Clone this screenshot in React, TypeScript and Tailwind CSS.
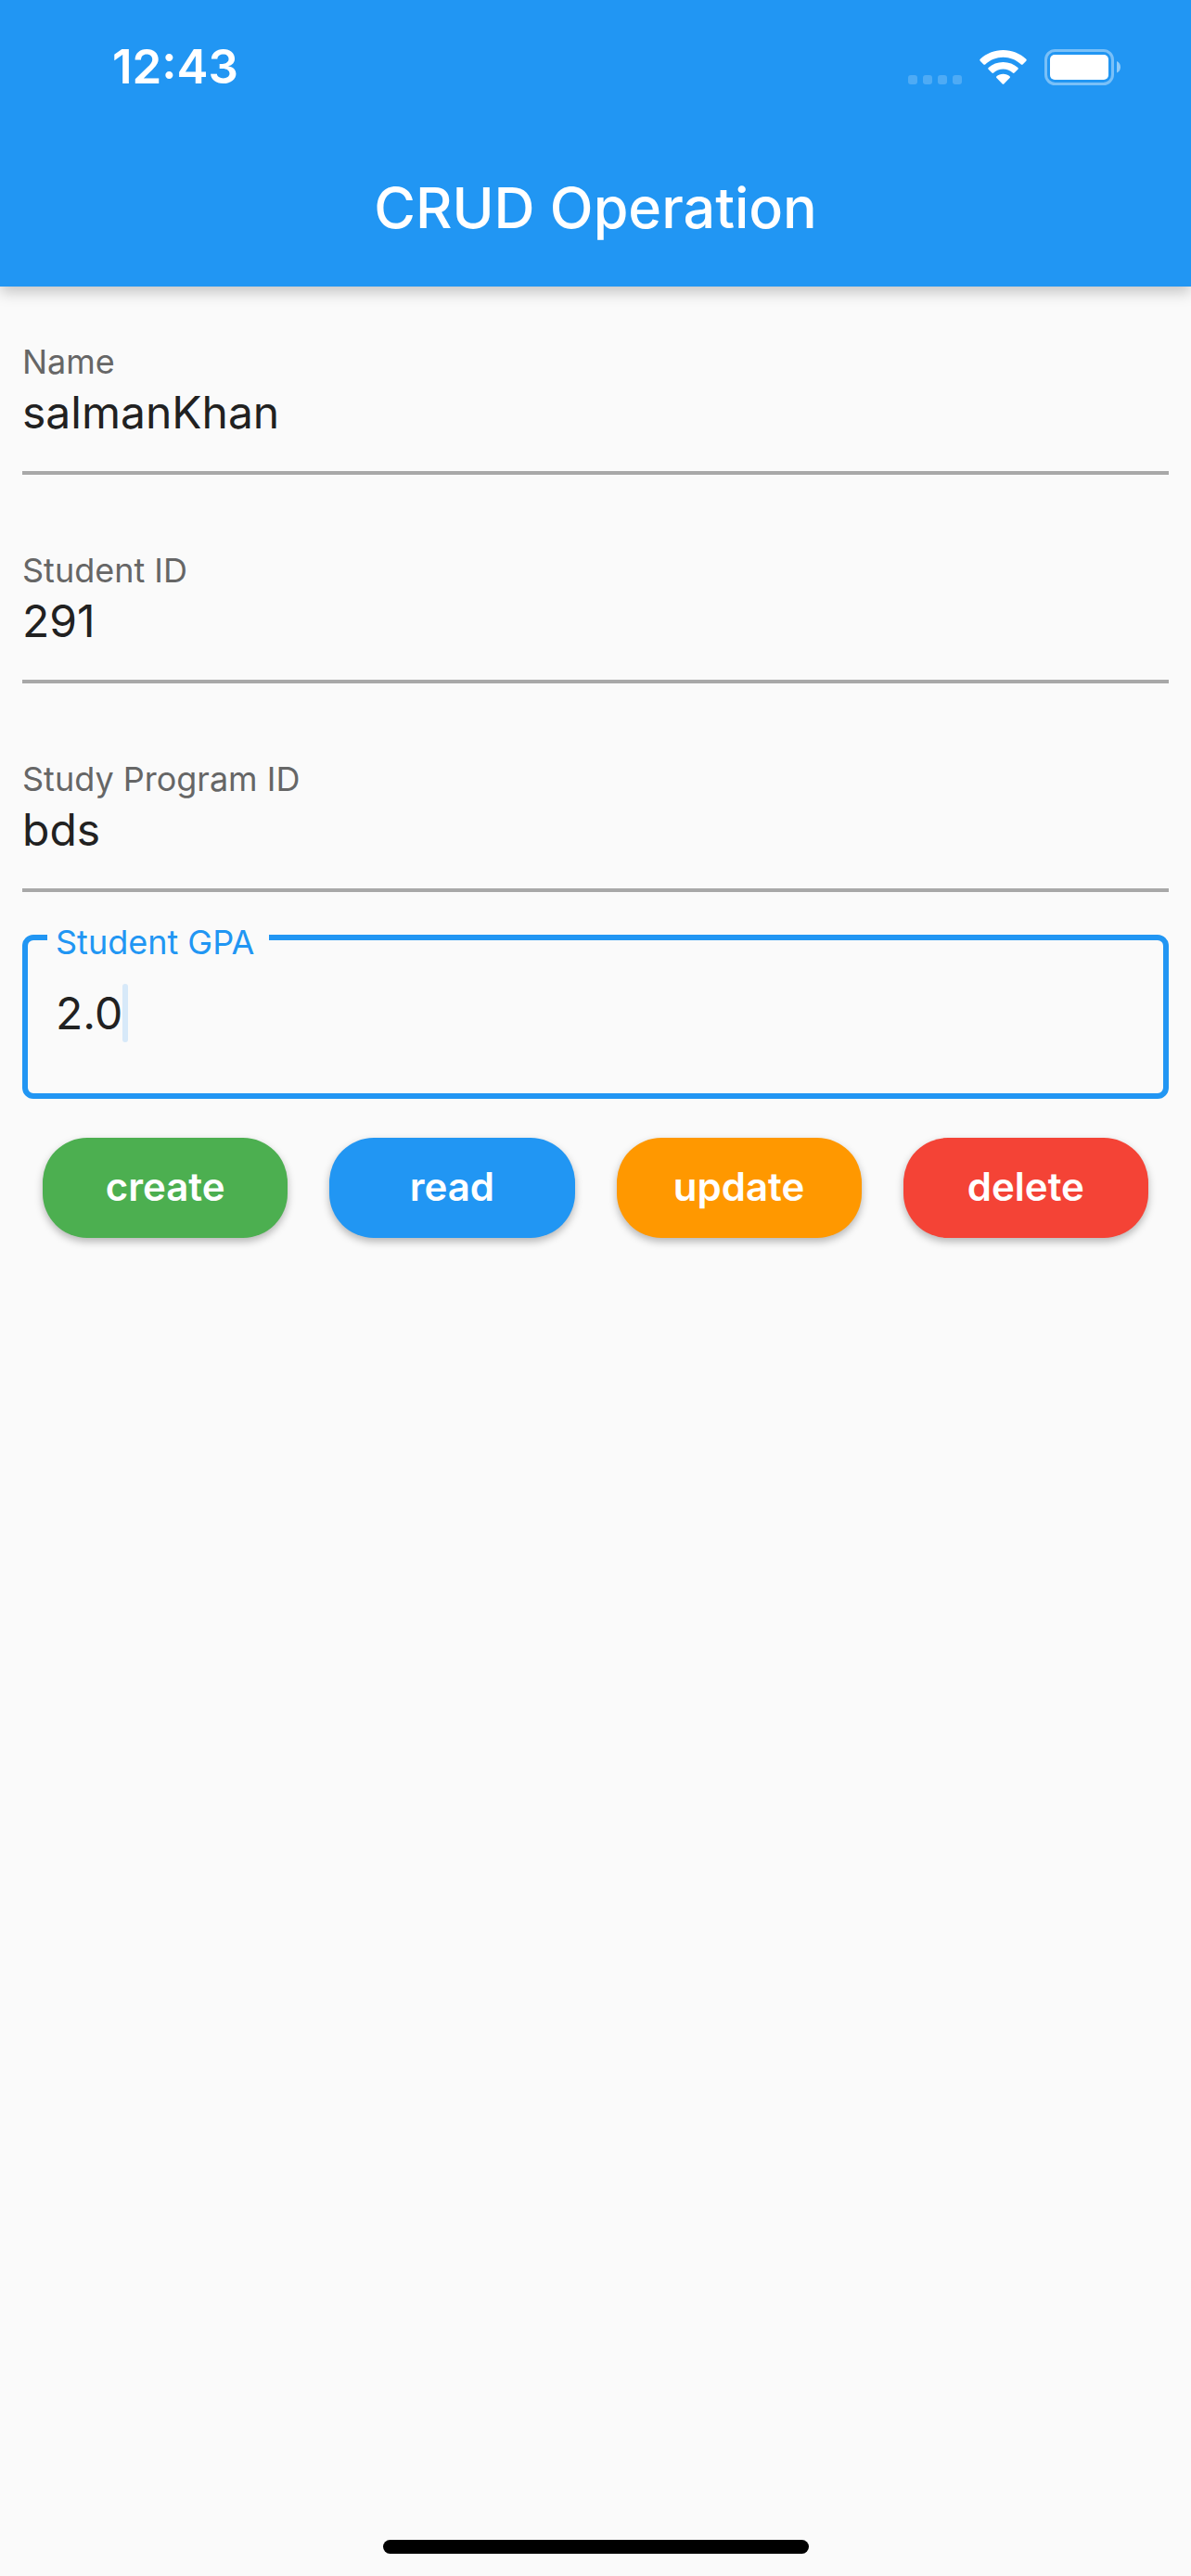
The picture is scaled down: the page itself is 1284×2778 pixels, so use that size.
import { useState } from "react";

const studentFields = [
  { id: "name", label: "Name", value: "salmanKhan" },
  { id: "student-id", label: "Student ID", value: "291" },
  { id: "program-id", label: "Study Program ID", value: "bds" },
];

const actions = [
  { label: "create", color: "bg-[#4caf50]" },
  { label: "read", color: "bg-[#2196f3]" },
  { label: "update", color: "bg-[#ff9800]" },
  { label: "delete", color: "bg-[#f44336]" },
];

function StatusIcons() {
  return (
    <svg className="h-[40px] w-[230px]" viewBox="979 52 230 40" fill="white" aria-hidden="true">
      <g opacity="0.2">
        <rect x="979" y="81" width="10" height="10" rx="3" />
        <rect x="995" y="81" width="10" height="10" rx="3" />
        <rect x="1011" y="81" width="10" height="10" rx="3" />
        <rect x="1027" y="81" width="10" height="10" rx="3" />
      </g>
      <path d="M1081.500 54 C1091 54 1099.500 57.500 1106.300 63.700 Q1107.300 64.700 1106.300 65.700 L1102.600 69.400 Q1101.700 70.200 1100.800 69.400 C1095.500 64.600 1088.700 61.800 1081.500 61.800 C1074.300 61.800 1067.500 64.600 1062.200 69.400 Q1061.300 70.200 1060.400 69.400 L1056.700 65.700 Q1055.700 64.700 1056.700 63.700 C1063.500 57.500 1072 54 1081.500 54 Z" />
      <path d="M1081.500 66.900 C1087.600 66.900 1093.100 69.100 1097.400 72.900 Q1098.300 73.800 1097.400 74.700 L1093.600 78.500 Q1092.700 79.300 1091.800 78.500 C1088.900 76 1085.300 74.600 1081.500 74.600 C1077.700 74.600 1074.100 76 1071.200 78.500 Q1070.300 79.300 1069.400 78.500 L1065.600 74.700 Q1064.700 73.800 1065.600 72.900 C1069.900 69.100 1075.400 66.900 1081.500 66.900 Z" />
      <path d="M1081.500 79.700 C1084.300 79.700 1086.900 80.600 1088.600 82.200 Q1089.500 83.100 1088.600 84 L1082.300 90.400 Q1081.500 91.200 1080.700 90.400 L1074.400 84 Q1073.500 83.100 1074.400 82.200 C1076.100 80.600 1078.700 79.700 1081.500 79.700 Z" />
      <rect x="1127.500" y="54.500" width="72" height="36" rx="10" fill="none" stroke="white" strokeWidth="3" opacity="0.4" />
      <rect x="1132" y="59" width="63" height="27" rx="5" />
      <path d="M1204 66 C1206.500 67 1208 69.300 1208 72.300 C1208 75.300 1206.500 77.600 1204 78.600 Z" opacity="0.5" />
    </svg>
  );
}

export default function App() {
  const [gpa, setGpa] = useState("2.0");

  return (
    <div className="flex min-h-screen flex-col bg-[#fafafa] font-['Inter',sans-serif] text-[#212121]">
      <header className="bg-[#2196f3] text-white shadow-[0_6px_15px_rgba(0,0,0,0.22)]">
        <div className="flex h-[141px] items-center justify-between pt-[3px] pr-[75px] pl-[121px]">
          <time className="text-[51px] leading-[60px] font-semibold">12:43</time>
          <StatusIcons />
        </div>
        <h1 className="flex h-[168px] items-center justify-center text-[61px] font-medium">
          CRUD Operation
        </h1>
      </header>

      <main className="flex-1">
        <form onSubmit={(event) => event.preventDefault()}>
          <div className="px-6">
            {studentFields.map((field) => (
              <div key={field.id} className="flex h-[225px] flex-col justify-end first:h-[203px]">
                <label htmlFor={field.id} className="text-[36px] leading-[44px] text-[#666666]">
                  {field.label}
                </label>
                <input
                  id={field.id}
                  type="text"
                  defaultValue={field.value}
                  className="h-[100px] border-b-4 border-[#a8a8a8] bg-transparent pb-[32px] text-[48px] outline-none"
                />
              </div>
            ))}

            <div className="relative mt-[46px] flex h-[177px] items-center rounded-xl border-6 border-[#2196f3] pb-2 pl-[30px]">
              <label
                htmlFor="gpa"
                className="absolute -top-5 left-[21px] bg-[#fafafa] pr-4 pl-[9px] text-[36px] leading-[44px] text-[#2196f3]"
              >
                Student GPA
              </label>
              <input
                id="gpa"
                type="text"
                value={gpa}
                onChange={(event) => setGpa(event.target.value)}
                className="field-sizing-content bg-transparent text-[48px] caret-transparent outline-none"
              />
              <span className="h-[63px] w-1.5 rounded-sm bg-[#d7e9f9]" aria-hidden="true" />
            </div>
          </div>

          <div className="mt-[42px] grid grid-cols-4 gap-[45px] px-[46px]">
            {actions.map((action) => (
              <button
                key={action.label}
                type="button"
                className={`h-[108px] rounded-[48px] pb-1 text-[42px] font-semibold text-white shadow-[0_4px_8px_rgba(0,0,0,0.28)] ${action.color}`}
              >
                {action.label}
              </button>
            ))}
          </div>
        </form>
      </main>

      <footer className="flex justify-center pb-6">
        <div className="h-[15px] w-[459px] rounded-full bg-black" />
      </footer>
    </div>
  );
}
